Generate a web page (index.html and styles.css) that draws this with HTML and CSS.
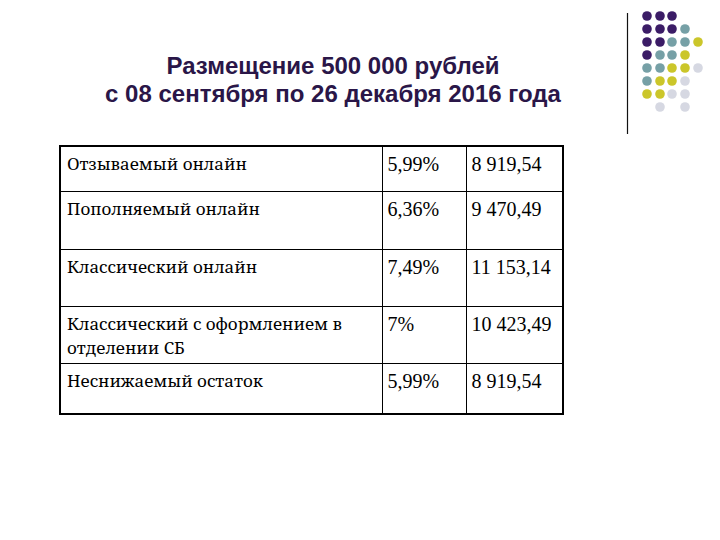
FILE: index.html
```html
<!DOCTYPE html>
<html>
<head>
<meta charset="utf-8">
<link rel="stylesheet" href="styles.css">
</head>
<body>
<div class="slide">
  <div class="deco">
    <svg width="110" height="140" viewBox="0 0 110 140" xmlns="http://www.w3.org/2000/svg">
      <line x1="17.5" y1="13" x2="17.5" y2="134" stroke="#111" stroke-width="1.2"/>
      <g>
        <circle cx="37" cy="16" r="4.8" fill="#3b1c66"/>
        <circle cx="50" cy="16" r="4.8" fill="#3b1c66"/>
        <circle cx="62" cy="16" r="4.8" fill="#3b1c66"/>

        <circle cx="37" cy="29" r="4.8" fill="#3b1c66"/>
        <circle cx="50" cy="29" r="4.8" fill="#3b1c66"/>
        <circle cx="62" cy="29" r="4.8" fill="#3b1c66"/>
        <circle cx="75" cy="29" r="4.8" fill="#76a0a6"/>

        <circle cx="37" cy="42" r="4.8" fill="#3b1c66"/>
        <circle cx="50" cy="42" r="4.8" fill="#3b1c66"/>
        <circle cx="62" cy="42" r="4.8" fill="#76a0a6"/>
        <circle cx="75" cy="42" r="4.8" fill="#76a0a6"/>
        <circle cx="88" cy="42" r="4.8" fill="#cbc62a"/>

        <circle cx="37" cy="55" r="4.8" fill="#3b1c66"/>
        <circle cx="50" cy="55" r="4.8" fill="#76a0a6"/>
        <circle cx="62" cy="55" r="4.8" fill="#76a0a6"/>
        <circle cx="75" cy="55" r="4.8" fill="#cbc62a"/>

        <circle cx="37" cy="68" r="4.8" fill="#76a0a6"/>
        <circle cx="50" cy="68" r="4.8" fill="#76a0a6"/>
        <circle cx="62" cy="68" r="4.8" fill="#cbc62a"/>
        <circle cx="75" cy="68" r="4.8" fill="#cbc62a"/>
        <circle cx="88" cy="68" r="4.8" fill="#d6d8e2"/>

        <circle cx="37" cy="81" r="4.8" fill="#76a0a6"/>
        <circle cx="50" cy="81" r="4.8" fill="#cbc62a"/>
        <circle cx="62" cy="81" r="4.8" fill="#cbc62a"/>
        <circle cx="75" cy="81" r="4.8" fill="#d6d8e2"/>

        <circle cx="37" cy="94" r="4.8" fill="#cbc62a"/>
        <circle cx="50" cy="94" r="4.8" fill="#cbc62a"/>
        <circle cx="62" cy="94" r="4.8" fill="#d6d8e2"/>
        <circle cx="75" cy="94" r="4.8" fill="#d6d8e2"/>

        <circle cx="50" cy="107" r="4.8" fill="#d6d8e2"/>
        <circle cx="75" cy="107" r="4.8" fill="#d6d8e2"/>
      </g>
    </svg>
  </div>

  <h1 class="title">Размещение 500 000 рублей<br>с 08 сентября по 26 декабря 2016 года</h1>

  <table class="rates">
    <colgroup>
      <col class="c-name">
      <col class="c-rate">
      <col class="c-sum">
    </colgroup>
    <tr class="r1"><td class="name">Отзываемый онлайн</td><td class="num">5,99%</td><td class="num">8 919,54</td></tr>
    <tr class="r2"><td class="name">Пополняемый онлайн</td><td class="num">6,36%</td><td class="num">9 470,49</td></tr>
    <tr class="r3"><td class="name">Классический онлайн</td><td class="num">7,49%</td><td class="num">11 153,14</td></tr>
    <tr class="r4"><td class="name">Классический с оформлением в отделении СБ</td><td class="num">7%</td><td class="num">10 423,49</td></tr>
    <tr class="r5"><td class="name">Неснижаемый остаток</td><td class="num">5,99%</td><td class="num">8 919,54</td></tr>
  </table>
</div>
</body>
</html>
```

FILE: styles.css
```css
html, body {
  margin: 0;
  padding: 0;
  background: #fff;
}

.slide {
  position: relative;
  width: 720px;
  height: 540px;
  overflow: hidden;
  background: #fff;
}

.deco {
  position: absolute;
  left: 610px;
  top: 0;
  width: 110px;
  height: 140px;
}

.deco svg {
  display: block;
}

.title {
  margin: 0 0 0 53px;
  padding-top: 52px;
  width: 560px;
  font-family: "Liberation Sans", Arial, sans-serif;
  font-weight: bold;
  font-size: 24px;
  line-height: 28px;
  color: #2a1648;
  text-align: center;
}

.rates {
  margin: 37px 0 0 59px;
  border-collapse: collapse;
  border: 2px solid #000;
  color: #000;
}

.rates td {
  border: 1px solid #000;
  vertical-align: top;
  box-sizing: border-box;
}

.rates .name {
  font-family: "Noto Serif", "DejaVu Serif", serif;
  font-size: 17px;
  line-height: 24px;
  padding: 5px 6px 0 6px;
}

.rates .num {
  font-family: "Liberation Serif", "Times New Roman", serif;
  font-size: 20px;
  line-height: 24px;
  padding: 5px 5px 0 5px;
}

.c-name { width: 322px; }
.c-rate { width: 84px; }
.c-sum  { width: 97px; }

.r1 td { height: 45px; }
.r2 td { height: 58px; }
.r3 td { height: 57px; }
.r4 td { height: 57px; }
.r5 td { height: 51px; }
```
